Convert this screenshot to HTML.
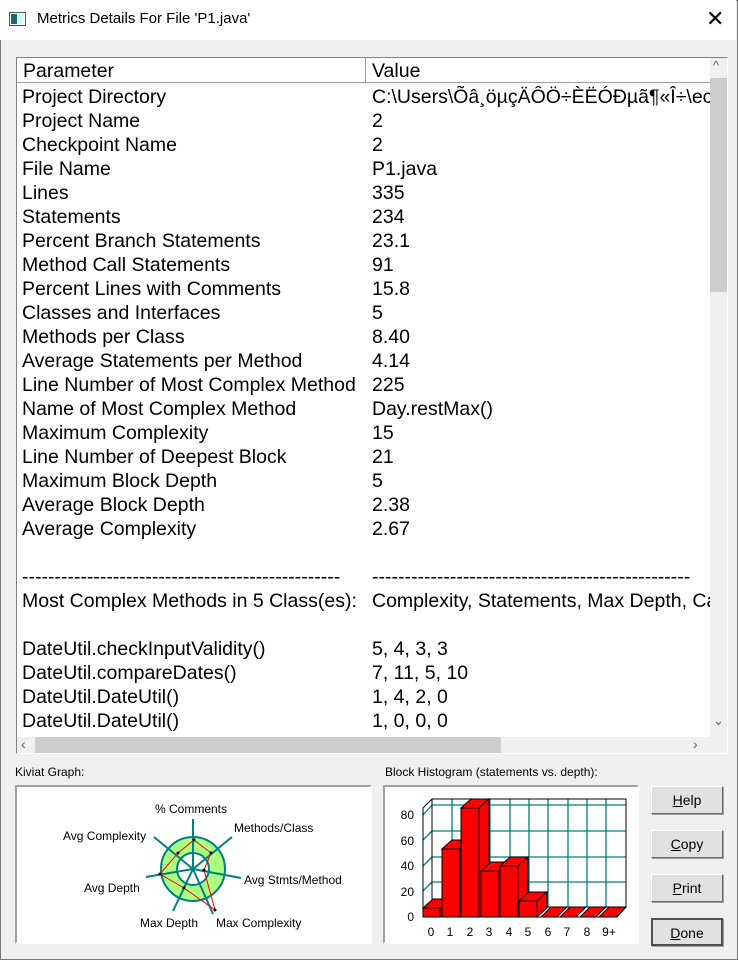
<!DOCTYPE html>
<html><head><meta charset="utf-8"><style>
*{margin:0;padding:0;box-sizing:border-box}
body{width:738px;height:960px;background:#f0f0f0;font-family:"Liberation Sans",Arial,sans-serif;position:relative;overflow:hidden}
.win{position:absolute;left:0;top:0;width:738px;height:960px;border:1px solid #7a7a7a}
.title{position:absolute;left:0;top:0;width:736px;height:40px;background:#fff}
.t{position:absolute;white-space:nowrap}
.list{position:absolute;left:16px;top:57px;width:712px;height:697px;background:#fff;border:1px solid #828282;border-right-color:#fff;border-bottom-color:#fff;overflow:hidden}
.r{position:absolute;font-size:19.5px;line-height:22px;white-space:nowrap;color:#000}
.btn{position:absolute;left:651px;width:72px;height:28px;background:#e1e1e1;border:1px solid #fff;border-right-color:#696969;border-bottom-color:#696969;box-shadow:1px 1px 0 #a0a0a0;font-size:14px;text-align:center;line-height:26px}
.box{position:absolute;background:#fff;border:2px solid #a0a0a0;border-right-color:#fff;border-bottom-color:#fff}
.lab{position:absolute;font-size:12px;color:#000;white-space:nowrap}
</style></head><body>
<div class="win"></div>
<div class="title">
<svg style="position:absolute;left:9px;top:12px" width="18" height="15"><rect x="0.5" y="0.5" width="16" height="13" fill="#fff" stroke="#555"/><rect x="2" y="2" width="6" height="10" fill="#1a6a6a"/><rect x="8" y="2" width="7" height="10" fill="#cfe"/></svg>
<div class="t" style="left:37px;top:10px;font-size:15px">Metrics Details For File 'P1.java'</div>
<div class="t" style="left:706px;top:6px;font-size:22px;font-weight:300">✕</div>
</div>
<div class="list">
<div style="position:absolute;left:0;top:0;width:693px;height:25px;background:#fff;border-bottom:1px solid #a0a0a0"></div>
<div style="position:absolute;left:348px;top:0;width:1px;height:25px;background:#a0a0a0"></div>
<div class="r" style="left:6px;top:2px">Parameter</div>
<div class="r" style="left:355px;top:2px">Value</div>
<div style="position:absolute;left:693px;top:0;width:18px;height:679px;background:#f0f0f0"></div>
<div style="position:absolute;left:693px;top:20px;width:18px;height:214px;background:#cdcdcd"></div>
<div class="t" style="left:696px;top:0px;font-size:13px;color:#606060">^</div>
<div class="t" style="left:696px;top:655px;font-size:13px;color:#606060">&#8964;</div>
<div style="position:absolute;left:0;top:679px;width:711px;height:18px;background:#f0f0f0"></div>
<div style="position:absolute;left:18px;top:679px;width:466px;height:18px;background:#cdcdcd"></div>
<div class="t" style="left:4px;top:678px;font-size:14px;color:#606060">&lsaquo;</div>
<div class="t" style="left:676px;top:678px;font-size:14px;color:#606060">&rsaquo;</div>
</div>
<div style="position:absolute;left:17px;top:60px">
<div class="r" style="left:5px;top:26px">Project Directory</div><div class="r" style="left:355px;top:26px;width:338px;overflow:hidden">C:\Users\Õâ¸öµçÄÔÖ÷ÈËÓÐµã¶«Î÷\eclipse</div>
<div class="r" style="left:5px;top:50px">Project Name</div><div class="r" style="left:355px;top:50px">2</div>
<div class="r" style="left:5px;top:74px">Checkpoint Name</div><div class="r" style="left:355px;top:74px">2</div>
<div class="r" style="left:5px;top:98px">File Name</div><div class="r" style="left:355px;top:98px">P1.java</div>
<div class="r" style="left:5px;top:122px">Lines</div><div class="r" style="left:355px;top:122px">335</div>
<div class="r" style="left:5px;top:146px">Statements</div><div class="r" style="left:355px;top:146px">234</div>
<div class="r" style="left:5px;top:170px">Percent Branch Statements</div><div class="r" style="left:355px;top:170px">23.1</div>
<div class="r" style="left:5px;top:194px">Method Call Statements</div><div class="r" style="left:355px;top:194px">91</div>
<div class="r" style="left:5px;top:218px">Percent Lines with Comments</div><div class="r" style="left:355px;top:218px">15.8</div>
<div class="r" style="left:5px;top:242px">Classes and Interfaces</div><div class="r" style="left:355px;top:242px">5</div>
<div class="r" style="left:5px;top:266px">Methods per Class</div><div class="r" style="left:355px;top:266px">8.40</div>
<div class="r" style="left:5px;top:290px">Average Statements per Method</div><div class="r" style="left:355px;top:290px">4.14</div>
<div class="r" style="left:5px;top:314px">Line Number of Most Complex Method</div><div class="r" style="left:355px;top:314px">225</div>
<div class="r" style="left:5px;top:338px">Name of Most Complex Method</div><div class="r" style="left:355px;top:338px">Day.restMax()</div>
<div class="r" style="left:5px;top:362px">Maximum Complexity</div><div class="r" style="left:355px;top:362px">15</div>
<div class="r" style="left:5px;top:386px">Line Number of Deepest Block</div><div class="r" style="left:355px;top:386px">21</div>
<div class="r" style="left:5px;top:410px">Maximum Block Depth</div><div class="r" style="left:355px;top:410px">5</div>
<div class="r" style="left:5px;top:434px">Average Block Depth</div><div class="r" style="left:355px;top:434px">2.38</div>
<div class="r" style="left:5px;top:458px">Average Complexity</div><div class="r" style="left:355px;top:458px">2.67</div>
<div class="r" style="left:5px;top:506px">-------------------------------------------------</div><div class="r" style="left:355px;top:506px">-------------------------------------------------</div>
<div class="r" style="left:5px;top:530px">Most Complex Methods in 5 Class(es):</div><div class="r" style="left:355px;top:530px;width:338px;overflow:hidden">Complexity, Statements, Max Depth, Calls</div>
<div class="r" style="left:5px;top:578px">DateUtil.checkInputValidity()</div><div class="r" style="left:355px;top:578px">5, 4, 3, 3</div>
<div class="r" style="left:5px;top:602px">DateUtil.compareDates()</div><div class="r" style="left:355px;top:602px">7, 11, 5, 10</div>
<div class="r" style="left:5px;top:626px">DateUtil.DateUtil()</div><div class="r" style="left:355px;top:626px">1, 4, 2, 0</div>
<div class="r" style="left:5px;top:650px">DateUtil.DateUtil()</div><div class="r" style="left:355px;top:650px">1, 0, 0, 0</div>
</div>
<div class="lab" style="left:15px;top:765px">Kiviat Graph:</div>
<div class="lab" style="left:385px;top:765px">Block Histogram (statements vs. depth):</div>
<div class="box" style="left:15px;top:785px;width:357px;height:159px"></div>
<div class="box" style="left:383px;top:785px;width:256px;height:159px"></div>
<svg style="position:absolute;left:0;top:0" width="738" height="960">
<circle cx="193" cy="869" r="24" fill="none" stroke="#aaff80" stroke-width="15"/>
<circle cx="193" cy="869" r="32" fill="none" stroke="#008080" stroke-width="2"/>
<circle cx="193" cy="869" r="16" fill="none" stroke="#008080" stroke-width="2"/>
<g stroke="#008080" stroke-width="2">
<line x1="193" y1="869" x2="193" y2="819"/>
<line x1="193" y1="869" x2="232" y2="837"/>
<line x1="193" y1="869" x2="241" y2="878"/>
<line x1="193" y1="869" x2="213" y2="914"/>
<line x1="193" y1="869" x2="173" y2="911"/>
<line x1="193" y1="869" x2="146" y2="877"/>
<line x1="193" y1="869" x2="154" y2="837"/>
</g>
<polygon points="194,840 211,853 204,870 215,910 184,888 160,874 178,853" fill="none" stroke="#f00" stroke-width="1"/>
<g fill="#000"><circle cx="194" cy="840" r="1.5"/><circle cx="211" cy="853" r="1.5"/><circle cx="204" cy="870" r="1.5"/><circle cx="215" cy="910" r="1.5"/><circle cx="184" cy="888" r="1.5"/><circle cx="160" cy="874" r="1.5"/><circle cx="178" cy="853" r="1.5"/></g>
<g font-family="Liberation Sans,sans-serif" font-size="12" fill="#000">
<text x="155" y="813">% Comments</text>
<text x="234" y="832">Methods/Class</text>
<text x="63" y="840">Avg Complexity</text>
<text x="244" y="884">Avg Stmts/Method</text>
<text x="84" y="892">Avg Depth</text>
<text x="140" y="927">Max Depth</text>
<text x="216" y="927">Max Complexity</text>
</g>
<g stroke="#008080" stroke-width="1.3" fill="none">
<line x1="432" y1="805" x2="626" y2="805"/><line x1="432" y1="831" x2="626" y2="831"/><line x1="432" y1="857" x2="626" y2="857"/><line x1="432" y1="882" x2="626" y2="882"/>
<line x1="423" y1="815" x2="432" y2="805"/><line x1="423" y1="840" x2="432" y2="831"/><line x1="423" y1="866" x2="432" y2="857"/><line x1="423" y1="891" x2="432" y2="882"/>
<line x1="452" y1="799" x2="452" y2="907"/><line x1="471" y1="799" x2="471" y2="907"/><line x1="490" y1="799" x2="490" y2="907"/><line x1="510" y1="799" x2="510" y2="907"/><line x1="529" y1="799" x2="529" y2="907"/><line x1="548" y1="799" x2="548" y2="907"/><line x1="568" y1="799" x2="568" y2="907"/><line x1="587" y1="799" x2="587" y2="907"/><line x1="606" y1="799" x2="606" y2="907"/>
</g>
<g stroke="#000" stroke-width="1" fill="none">
<polyline points="423,917 423,808 432,799 626,799 626,907 617,917 423,917"/>
<line x1="432" y1="799" x2="432" y2="907"/><line x1="432" y1="907" x2="626" y2="907"/><line x1="423" y1="917" x2="432" y2="907"/>
</g>
<g stroke="#000" stroke-width="1" fill="#f00">
<polygon points="423,908 433,899 450,899 440,908"/><polygon points="440,908 450,899 450,908 440,917"/><rect x="423" y="908" width="17" height="9"/>
<polygon points="442,849 452,840 470,840 460,849"/><polygon points="460,849 470,840 470,908 460,917"/><rect x="442" y="849" width="18" height="68"/>
<polygon points="461,808 471,799 489,799 479,808"/><polygon points="479,808 489,799 489,908 479,917"/><rect x="461" y="808" width="18" height="109"/>
<polygon points="481,871 491,862 509,862 499,871"/><polygon points="499,871 509,862 509,908 499,917"/><rect x="481" y="871" width="18" height="46"/>
<polygon points="500,866 510,857 528,857 518,866"/><polygon points="518,866 528,857 528,908 518,917"/><rect x="500" y="866" width="18" height="51"/>
<polygon points="519,901 529,892 547,892 537,901"/><polygon points="537,901 547,892 547,908 537,917"/><rect x="519" y="901" width="18" height="16"/>
<polygon points="541,917 551,907 567,907 557,917"/><polygon points="560,917 570,907 586,907 576,917"/><polygon points="580,917 590,907 606,907 596,917"/><polygon points="599,917 609,907 626,907 616,917"/>
</g>
<g font-family="Liberation Sans,sans-serif" font-size="12" fill="#000" text-anchor="end">
<text x="414" y="819">80</text><text x="414" y="845">60</text><text x="414" y="870">40</text><text x="414" y="896">20</text><text x="414" y="921">0</text>
</g>
<g font-family="Liberation Sans,sans-serif" font-size="12" fill="#000" text-anchor="middle">
<text x="431" y="936">0</text><text x="450" y="936">1</text><text x="470" y="936">2</text><text x="489" y="936">3</text><text x="509" y="936">4</text><text x="528" y="936">5</text><text x="548" y="936">6</text><text x="567" y="936">7</text><text x="587" y="936">8</text><text x="609" y="936">9+</text>
</g>
</svg>
<div class="btn" style="top:786px"><u>H</u>elp</div>
<div class="btn" style="top:830px"><u>C</u>opy</div>
<div class="btn" style="top:874px"><u>P</u>rint</div>
<div class="btn" style="top:918px;border:2px solid #505050"><u>D</u>one</div>
</body></html>
